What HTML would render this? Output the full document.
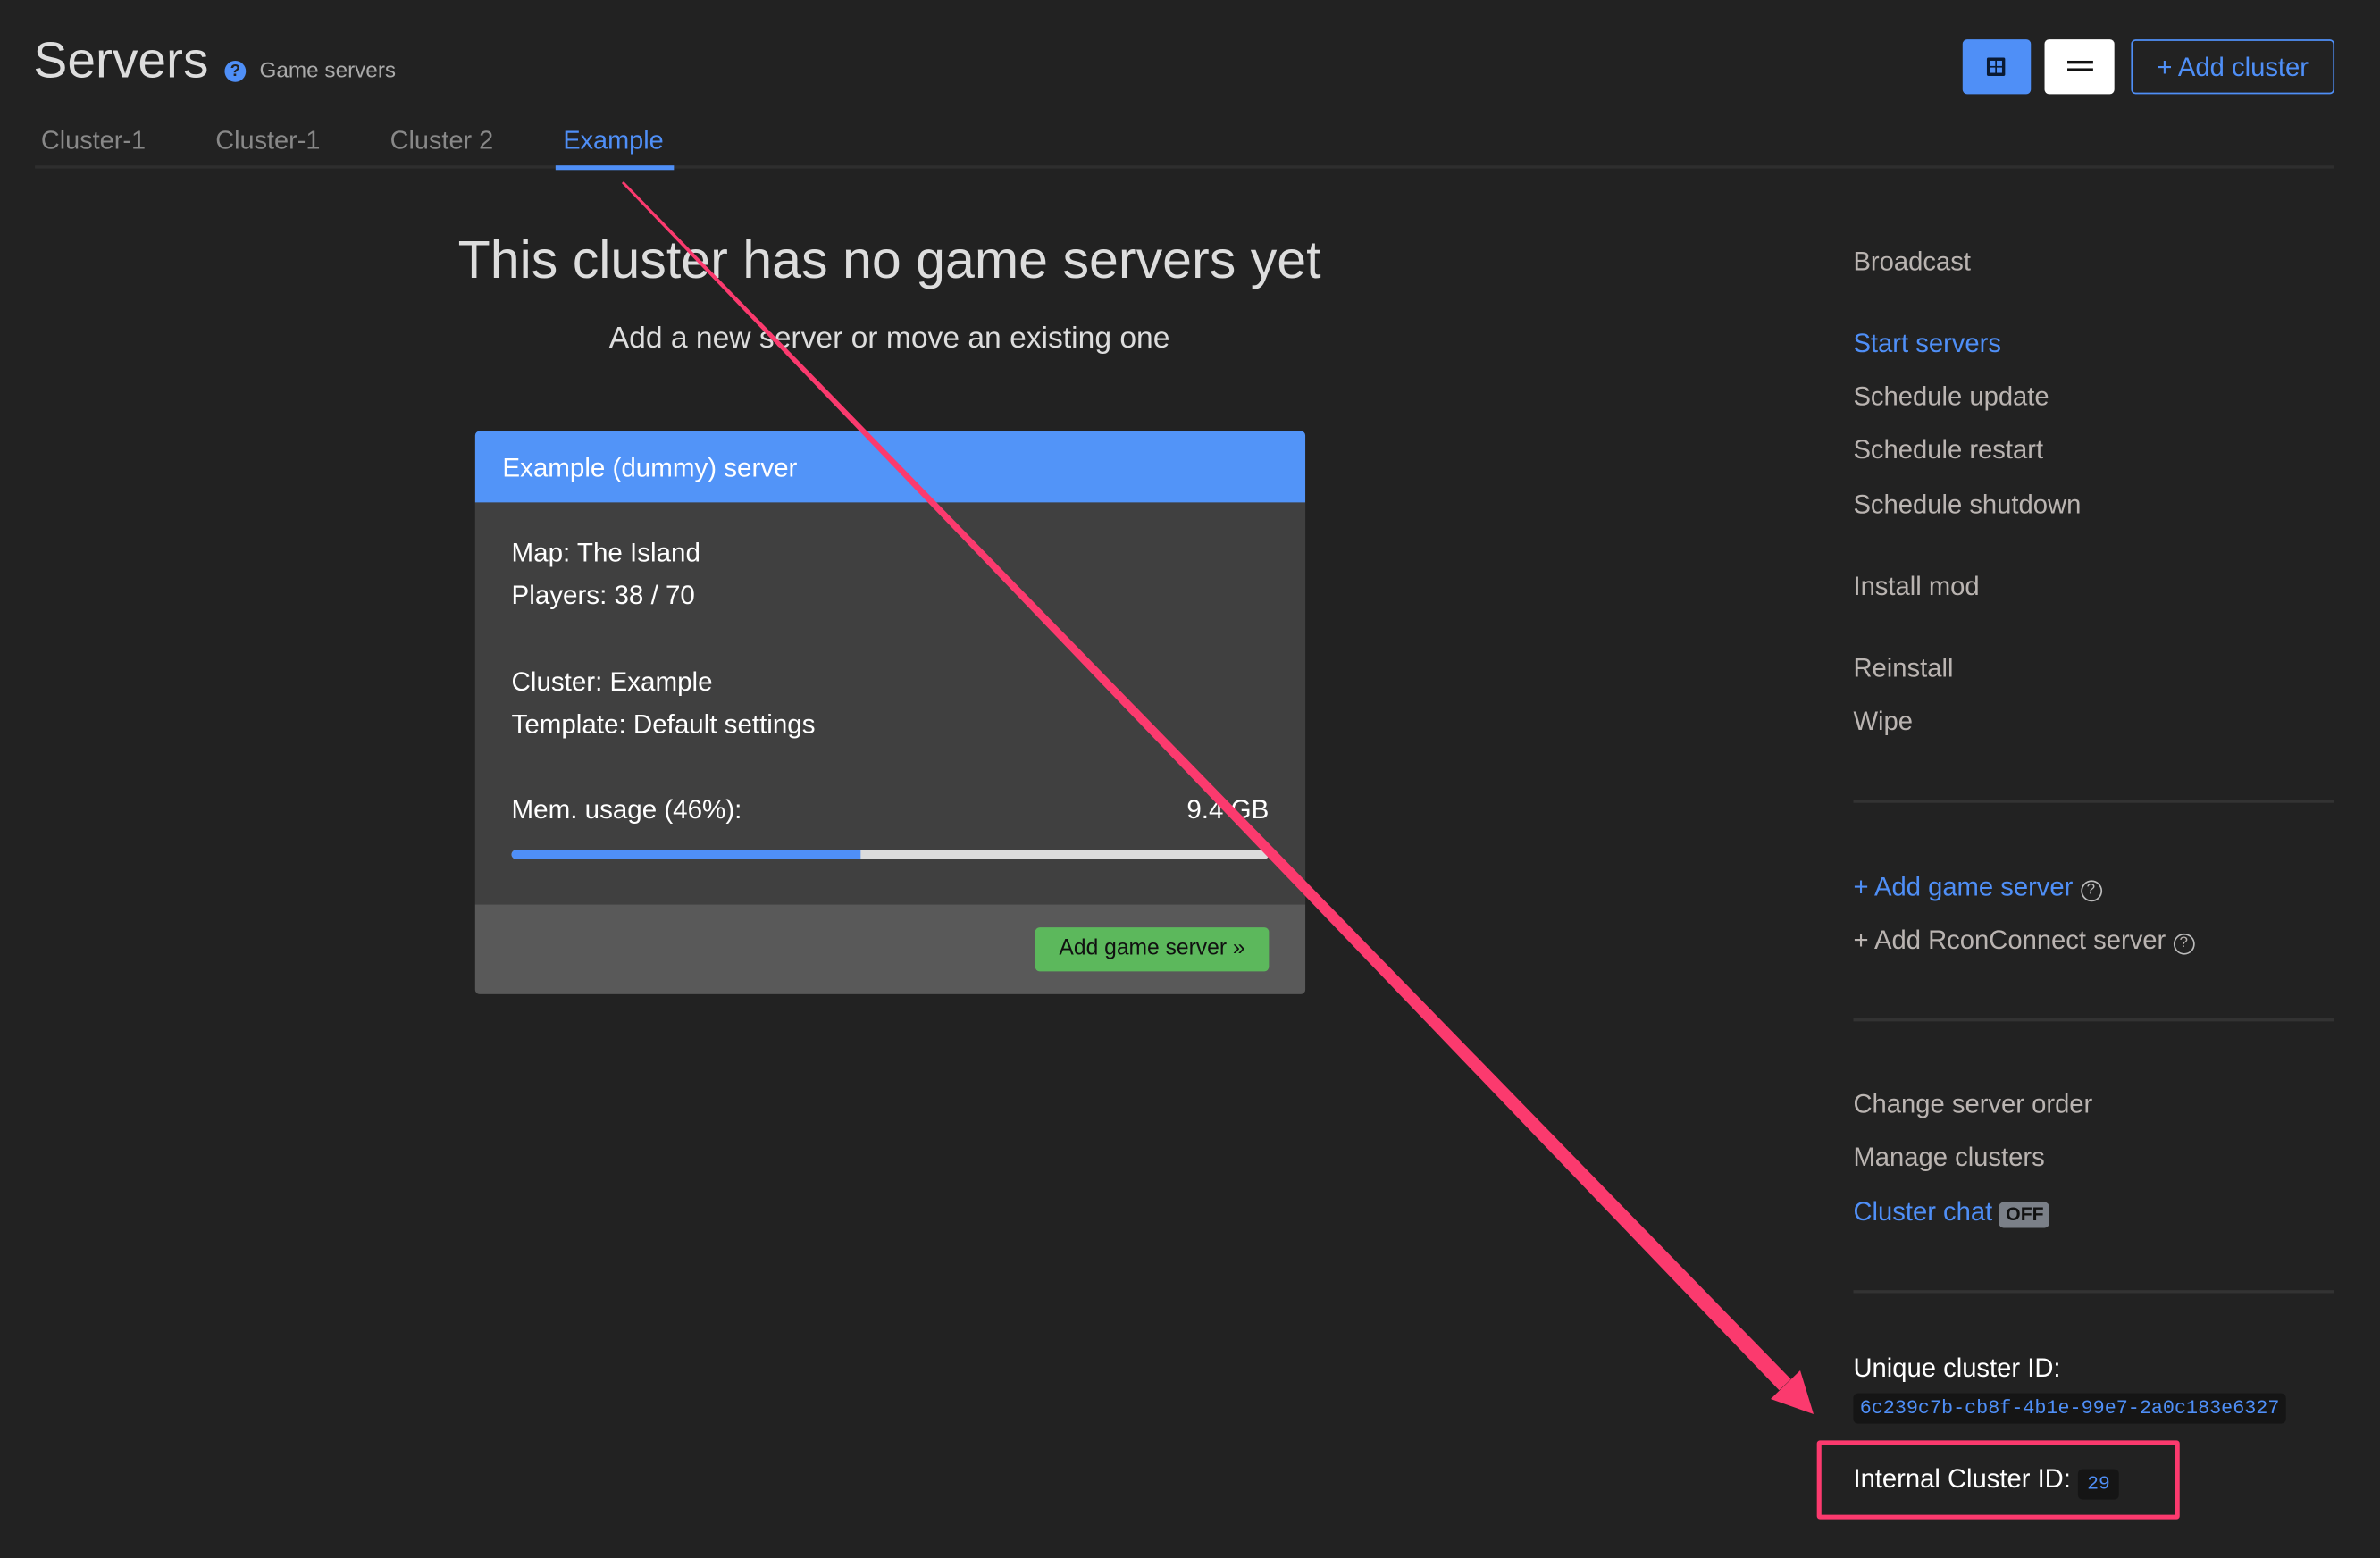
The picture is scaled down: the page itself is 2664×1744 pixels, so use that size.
<!DOCTYPE html>
<html><head><meta charset="utf-8"><style>
html,body{margin:0;padding:0;background:#222222;width:2664px;height:1744px;overflow:hidden}
#w{position:absolute;left:0;top:0;width:1568px;height:1026px;transform:scale(1.69898);transform-origin:0 0;font-family:"Liberation Sans",sans-serif}
.a{position:absolute;white-space:nowrap}
.s{color:#bab4b1;font-size:17.2px;left:1221px;line-height:20px}
.b{color:#4f8ff7}
.hr{position:absolute;left:1221px;width:317px;height:2px;background:#333}
.c{color:#fff;font-size:17.4px;left:337px;line-height:20px}
</style></head><body><div id="w">
<div class="a" style="left:22px;top:21px;font-size:33.5px;color:#ddd;line-height:40px">Servers</div>
<div class="a" style="left:148px;top:40px;width:14px;height:14px;border-radius:50%;background:#4f8ff7;color:#222;font-size:11px;font-weight:bold;text-align:center;line-height:14px">?</div>
<div class="a" style="left:171px;top:38px;font-size:14.3px;color:#aaa;line-height:18px">Game servers</div>
<div class="a" style="left:27px;top:83px;font-size:17px;color:#888;line-height:20px">Cluster-1</div>
<div class="a" style="left:142px;top:83px;font-size:17px;color:#888;line-height:20px">Cluster-1</div>
<div class="a" style="left:257px;top:83px;font-size:17px;color:#888;line-height:20px">Cluster 2</div>
<div class="a" style="left:371px;top:83px;font-size:17px;color:#4f8ff7;line-height:20px">Example</div>
<div class="a" style="left:23px;top:109px;width:1515px;height:2px;background:#2e2e2e"></div>
<div class="a" style="left:366px;top:109px;width:78px;height:3px;background:#4f8ff7"></div>
<div class="a" style="left:1293px;top:26px;width:45px;height:36px;background:#4f8ff7;border-radius:3px"></div>
<svg class="a" style="left:1308px;top:37px" width="14" height="14" viewBox="0 0 14 14"><rect x="1" y="1" width="12" height="12" rx="1" fill="#0a1a33"/><rect x="3" y="3" width="3.5" height="3.5" fill="#4f8ff7"/><rect x="7.5" y="3" width="3.5" height="3.5" fill="#4f8ff7"/><rect x="3" y="7.5" width="3.5" height="3.5" fill="#4f8ff7"/><rect x="7.5" y="7.5" width="3.5" height="3.5" fill="#4f8ff7"/></svg>
<div class="a" style="left:1347px;top:26px;width:46px;height:36px;background:#fff;border-radius:3px"></div>
<div class="a" style="left:1362px;top:40px;width:17px;height:2px;background:#111"></div>
<div class="a" style="left:1362px;top:45px;width:17px;height:2px;background:#111"></div>
<div class="a" style="left:1404px;top:26px;width:132px;height:34px;border:1px solid #4f8ff7;border-radius:3px;color:#4f8ff7;font-size:17.2px;text-align:center;line-height:35px">+ Add cluster</div>
<div class="a" style="left:186px;width:800px;text-align:center;top:151px;font-size:34.8px;color:#ddd;line-height:42px">This cluster has no game servers yet</div>
<div class="a" style="left:186px;width:800px;text-align:center;top:211px;font-size:19.8px;color:#ddd;line-height:24px">Add a new server or move an existing one</div>
<div class="a" style="left:313px;top:284px;width:547px;height:371px;background:#404040;border-radius:3px;overflow:hidden">
<div style="height:47px;background:#5294f8"></div>
<div style="position:absolute;left:0;top:312px;width:547px;height:59px;background:#595959"></div>
</div>
<div class="a" style="left:331px;top:298px;color:#fff;font-size:17.4px;line-height:20px">Example (dummy) server</div>
<div class="a c" style="top:354px">Map: The Island</div>
<div class="a c" style="top:382px">Players: 38 / 70</div>
<div class="a c" style="top:439px">Cluster: Example</div>
<div class="a c" style="top:467px">Template: Default settings</div>
<div class="a c" style="top:523px">Mem. usage (46%):</div>
<div class="a c" style="top:523px;left:760px;width:76px;text-align:right">9.4 GB</div>
<div class="a" style="left:337px;top:560px;width:499px;height:6px;background:#dcdcdc;border-radius:3px;overflow:hidden"><div style="width:230px;height:6px;background:#4f8ff7"></div></div>
<div class="a" style="left:682px;top:611px;width:154px;height:29px;background:#5cb85c;border-radius:3px;color:#111;font-size:14.5px;text-align:center;line-height:29px">Add game server »</div>
<div class="a s" style="top:162px">Broadcast</div>
<div class="a s b" style="top:216px">Start servers</div>
<div class="a s" style="top:251px">Schedule update</div>
<div class="a s" style="top:286px">Schedule restart</div>
<div class="a s" style="top:322px">Schedule shutdown</div>
<div class="a s" style="top:376px">Install mod</div>
<div class="a s" style="top:430px">Reinstall</div>
<div class="a s" style="top:465px">Wipe</div>
<div class="hr" style="top:527px"></div>
<div class="a s b" style="top:574px">+ Add game server <span style="display:inline-block;width:12px;height:12px;border:1.5px solid #bbb;border-radius:50%;font-size:10px;line-height:12px;text-align:center;color:#bbb;vertical-align:1px">?</span></div>
<div class="a s" style="top:609px">+ Add RconConnect server <span style="display:inline-block;width:12px;height:12px;border:1.5px solid #bbb;border-radius:50%;font-size:10px;line-height:12px;text-align:center;vertical-align:1px">?</span></div>
<div class="hr" style="top:671px"></div>
<div class="a s" style="top:717px">Change server order</div>
<div class="a s" style="top:752px">Manage clusters</div>
<div class="a s b" style="top:788px">Cluster chat <span style="display:inline-block;background:#7b8088;color:#111;font-size:12.5px;font-weight:bold;line-height:17px;padding:0 4px;border-radius:3px;vertical-align:0px">OFF</span></div>
<div class="hr" style="top:850px"></div>
<div class="a s" style="top:891px;color:#fff">Unique cluster ID:</div>
<div class="a" style="left:1221px;top:918px;width:285px;height:20px;background:#151515;border-radius:3px;color:#4f8ff7;font-family:'Liberation Mono',monospace;font-size:12.8px;line-height:20px;text-align:center">6c239c7b-cb8f-4b1e-99e7-2a0c183e6327</div>
<div class="a" style="left:1197px;top:949px;width:233px;height:46px;border:3px solid #fb3a6e;border-radius:2px"></div>
<div class="a s" style="top:964px;color:#fff">Internal Cluster ID: <span style="display:inline-block;background:#151515;color:#4f8ff7;font-family:'Liberation Mono',monospace;font-size:12.5px;line-height:20px;padding:0 6px;border-radius:3px;vertical-align:-1px">29</span></div>
</div>
<svg style="position:absolute;left:0;top:0" width="2664" height="1744">
<polygon points="695.9,205 698.1,203 2004.5,1543.7 1991.5,1556.3" fill="#fb3a6e"/>
<polygon points="1982,1566 2030,1583 2015,1534" fill="#fb3a6e"/>
</svg>
</body></html>
